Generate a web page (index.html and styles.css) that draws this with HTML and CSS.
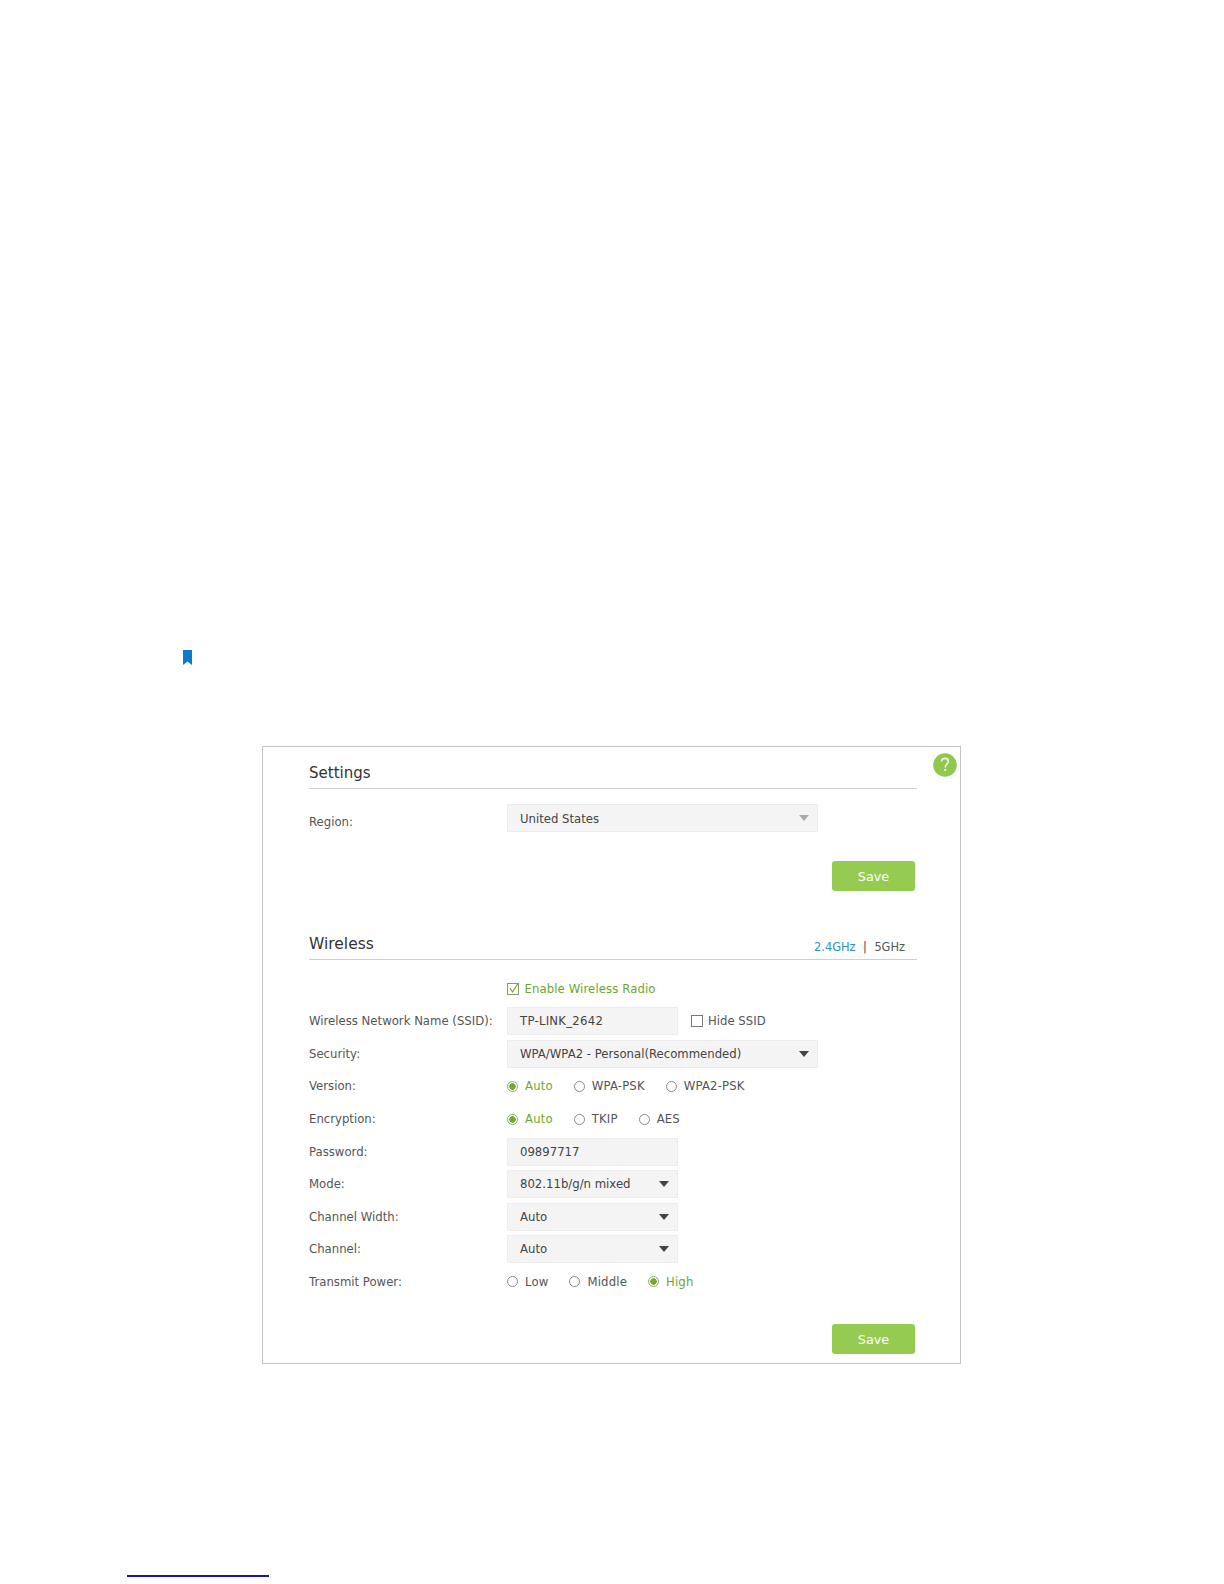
FILE: index.html
```html
<!DOCTYPE html>
<html lang="en">
<head>
<meta charset="utf-8">
<title>Wireless Settings</title>
<link rel="stylesheet" href="styles.css">
</head>
<body>
<div class="page">
  <svg class="bookmark" width="9" height="15" viewBox="0 0 9 15"><path d="M0 0H9V15L4.5 11.5L0 15Z" fill="#0c7cc8"/></svg>
  <div class="card">
    <svg class="help" width="24" height="24" viewBox="0 0 24 24"><circle cx="12" cy="12" r="11.8" fill="#8fc84d"/><path d="M8.6 8.6C8.6 6.5 10 5.4 12 5.4C14 5.4 15.4 6.6 15.4 8.4C15.4 10.8 12.2 11.2 12.2 14.4" fill="none" stroke="#f2f6ea" stroke-width="1.6"/><rect x="11.3" y="16" width="1.8" height="2" fill="#f2f6ea"/></svg>
    <div class="heading"><h2>Settings</h2></div>
    <div class="region-row">
      <span class="label region-label">Region:</span>
      <div class="field wide"><span>United States</span><i class="arrow grey"></i></div>
    </div>
    <div class="save-row"><button class="save">Save</button></div>
    <div class="heading wireless-heading"><h2 class="wireless-title">Wireless</h2><div class="bands"><span class="active">2.4GHz</span><span class="sep">|</span><span>5GHz</span></div></div>
    <div class="enable-row">
      <svg class="box" width="12" height="12" viewBox="0 0 12 12"><rect x=".5" y=".5" width="11" height="11" fill="none" stroke="#8a9a70"/><path d="M3 5L5.5 9L11 0.5" fill="none" stroke="#6fa52f" stroke-width="1.2"/></svg>
      <span class="on enable-text">Enable Wireless Radio</span>
    </div>
    <div class="rows">
      <div class="row"><span class="label">Wireless Network Name (SSID):</span><div class="field narrow"><span class="ssid-value">TP-LINK_2642</span></div>
        <label class="hide-ssid"><span class="box-empty"></span>Hide SSID</label></div>
      <div class="row"><span class="label">Security:</span><div class="field wide"><span>WPA/WPA2 - Personal(Recommended)</span><i class="arrow"></i></div></div>
      <div class="row"><span class="label">Version:</span><div class="radios">
        <span class="radio on"><i class="dot checked"></i>Auto</span><span class="radio"><i class="dot"></i>WPA-PSK</span><span class="radio"><i class="dot"></i>WPA2-PSK</span></div></div>
      <div class="row"><span class="label">Encryption:</span><div class="radios">
        <span class="radio on"><i class="dot checked"></i>Auto</span><span class="radio"><i class="dot"></i>TKIP</span><span class="radio"><i class="dot"></i>AES</span></div></div>
      <div class="row"><span class="label">Password:</span><div class="field narrow"><span>09897717</span></div></div>
      <div class="row"><span class="label">Mode:</span><div class="field narrow"><span>802.11b/g/n mixed</span><i class="arrow"></i></div></div>
      <div class="row"><span class="label">Channel Width:</span><div class="field narrow"><span>Auto</span><i class="arrow"></i></div></div>
      <div class="row"><span class="label">Channel:</span><div class="field narrow"><span>Auto</span><i class="arrow"></i></div></div>
      <div class="row"><span class="label">Transmit Power:</span><div class="radios">
        <span class="radio"><i class="dot"></i>Low</span><span class="radio"><i class="dot"></i>Middle</span><span class="radio on"><i class="dot checked"></i>High</span></div></div>
    </div>
    <div class="save-row last-save"><button class="save">Save</button></div>
  </div>
  <div class="footnote-rule"></div>
</div>
</body>
</html>
```
FILE: styles.css
```css
* { box-sizing: border-box; }
html, body { margin: 0; padding: 0; background: #fff; }
body { font-family: "DejaVu Sans", Verdana, sans-serif; font-size: 11.7px; color: #555; }
.page { width: 1224px; height: 1584px; padding-top: 650px; overflow: hidden; }
.bookmark { display: block; margin-left: 183px; }
.card { position: relative; width: 699px; height: 618px; margin: 81px 0 0 262px; border: 1px solid #c4c4c4; padding: 0 43px 0 46px; }
.help { position: absolute; top: 6px; right: 3px; }
.heading { display: flex; justify-content: space-between; align-items: flex-end; border-bottom: 1px solid #cfcfcf; height: 42px; }
h2 { margin: 0; font-weight: 400; font-size: 15px; color: #333; line-height: 20px; padding-bottom: 5px; }
.wireless-title { font-size: 15.5px; }
.region-row { display: flex; margin-top: 15px; height: 28px; }
.region-row .field { padding-top: 2px; }
.region-row .arrow { margin-top: -2px; }
.label { width: 198px; flex: none; color: #555; }
.region-label { padding-top: 11px; }
.field { display: flex; align-items: center; justify-content: space-between; height: 28px; background: #f4f4f4; border: 1px solid #ececec; padding: 0 8.5px 0 12px; color: #444; }
.wide { width: 311px; }
.narrow { width: 171px; }
.ssid-value { letter-spacing: .25px; }
.arrow { width: 0; height: 0; border-left: 5px solid transparent; border-right: 5px solid transparent; border-top: 6.5px solid #444; }
.arrow.grey { border-top-color: #aaa; }
.save-row { display: flex; justify-content: flex-end; padding-right: 2px; margin-top: 29px; }
.last-save { margin-top: 28.6px; }
.save { width: 83px; height: 30px; border: 0; border-radius: 3px; background: #95cb50; color: #fff; font: 12.8px "DejaVu Sans", sans-serif; padding: 0; }
.wireless-heading { margin-top: 27px; }
.bands { display: flex; gap: 7.5px; padding: 0 12px 5px 0; font-size: 11.4px; color: #555; }
.bands .active { color: #2a95bf; }
.bands .sep { color: #444; }
.enable-row { display: flex; align-items: center; gap: 5.5px; margin: 23px 0 0 198px; height: 12px; }
.enable-text { letter-spacing: .1px; }
.on { color: #6fa52f; }
.rows { display: flex; flex-direction: column; gap: 4.55px; margin-top: 12.4px; }
.row { display: flex; align-items: center; height: 28px; }
.hide-ssid { display: flex; align-items: center; gap: 5px; margin-left: 13px; }
.box-empty { width: 12px; height: 12px; border: 1px solid #777; }
.radios { display: flex; align-items: center; gap: 21px; }
.radio { display: flex; align-items: center; gap: 7px; letter-spacing: .15px; }
.radio .dot { width: 11px; height: 11px; border-radius: 50%; border: 1px solid #888; display: block; background: #fff; }
.radio .dot.checked { border-color: #8ab35a; background: radial-gradient(circle, #76a93a 0 3px, #fff 3.5px); }
.footnote-rule { width: 142px; height: 1.5px; background: #1a1aa0; margin: 211px 0 0 127px; }
```
